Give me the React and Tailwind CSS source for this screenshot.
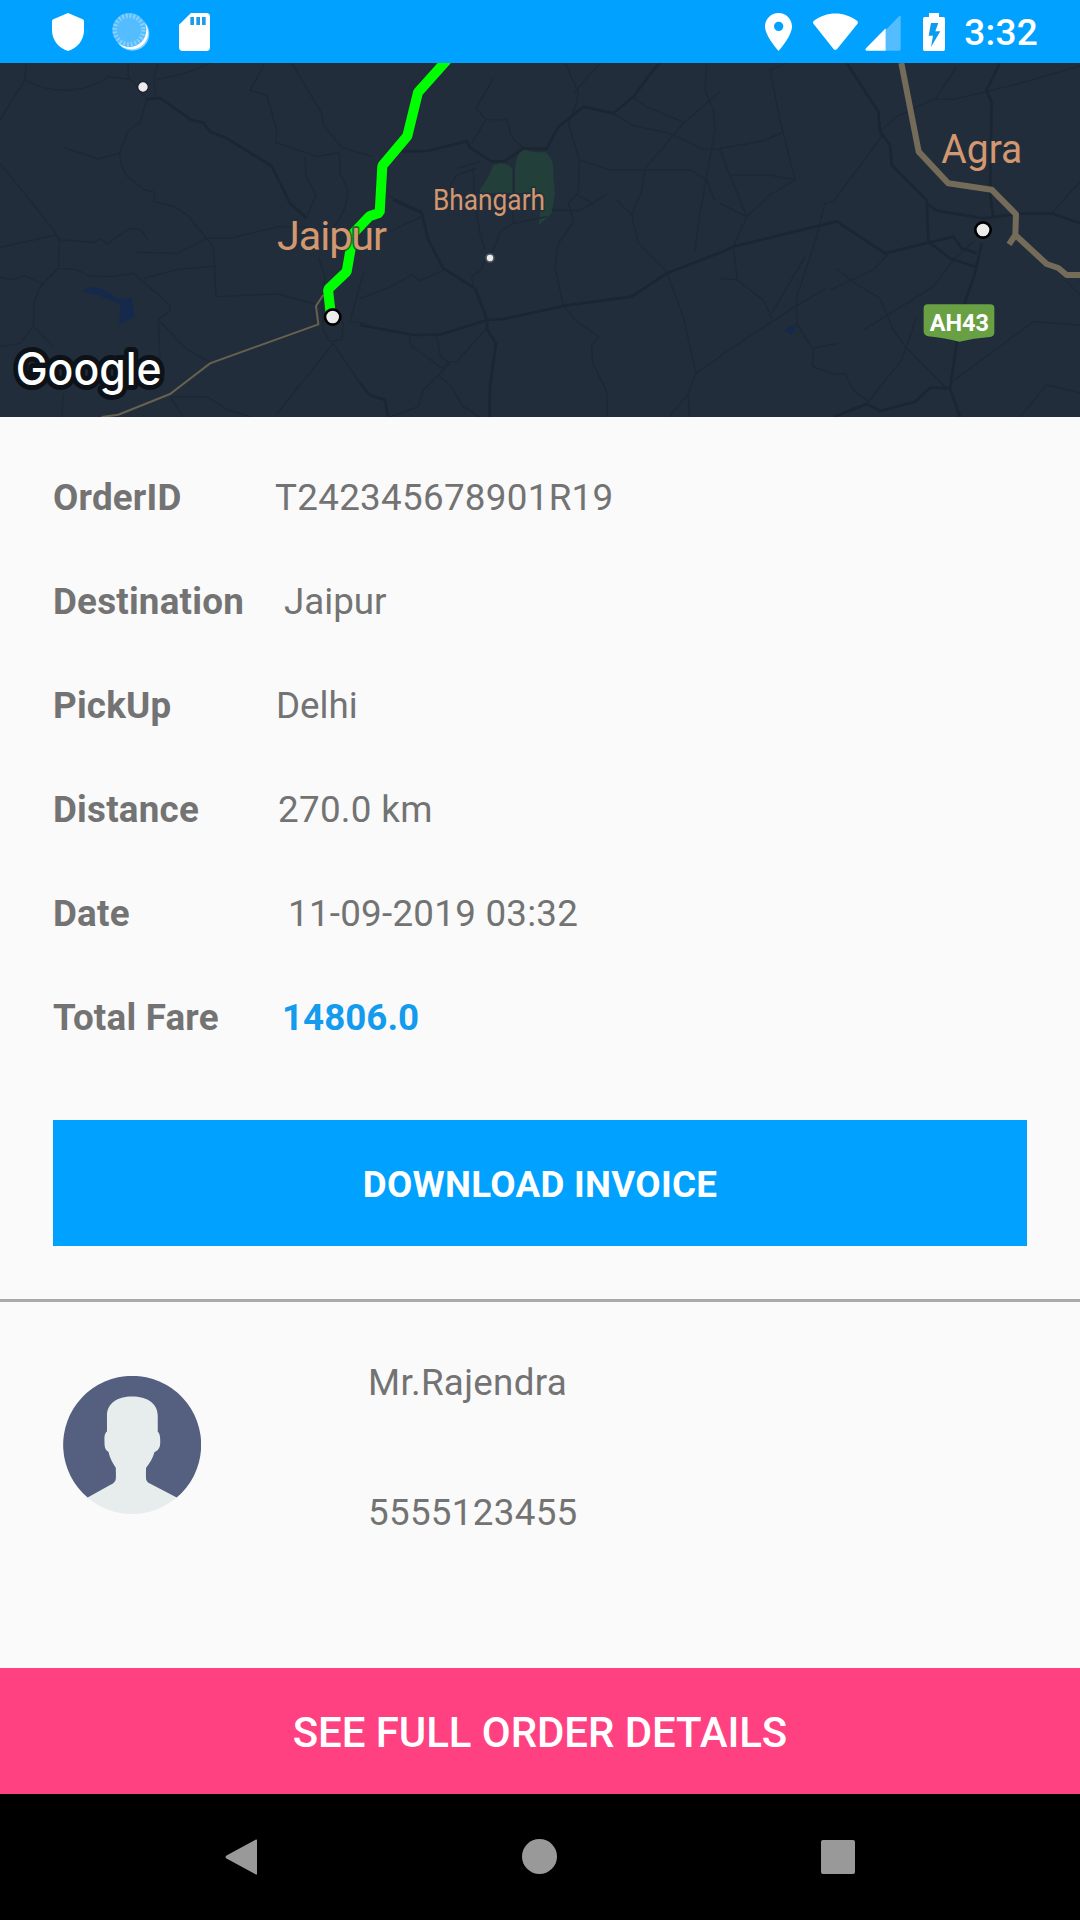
import React from "react";

function StatusBar() {
  return (
    <header className="flex h-[63px] items-center justify-between bg-[#00a1ff] pl-[52px] pr-[42px] text-white">
      <div className="flex items-center">
        <svg className="h-[38px] w-8" viewBox="157 37 96 114" fill="currentColor">
          <path d="M205 37 L249 56 Q253 58 253 62 V89 C253 119 232 144 205 151 C178 144 157 119 157 89 V62 Q157 58 161 56 Z" />
        </svg>
        <svg className="ml-[28px] h-[38px] w-[38px]" viewBox="337 37 114 114">
          <circle cx="398" cy="99" r="51" fill="#8fd3ff" />
          <circle cx="395" cy="96" r="50" fill="#ffffff" />
          <circle cx="389" cy="88" r="51" fill="#54bdff" />
          <circle cx="388" cy="88" r="43" fill="none" stroke="#8dd2ff" strokeWidth="13" strokeDasharray="5 6.3" />
        </svg>
        <svg className="ml-[29px] h-[38px] w-[31px]" viewBox="537 37 93 114">
          <path d="M573 37 H619 Q630 37 630 48 V140 Q630 151 619 151 H548 Q537 151 537 140 V72 Z" fill="#fff" />
          <path d="M571 49h11v24h-11z M589 49h11v24h-11z M606 49h11v24h-11z" fill="#1e9ce8" />
        </svg>
      </div>
      <div className="flex items-center">
        <svg className="h-[38px] w-[27px]" viewBox="75 37 81 114" fill="currentColor">
          <path fillRule="evenodd" d="M116 37 C93 37 75 55 75 77 C75 107 116 151 116 151 C116 151 156 107 156 77 C156 55 138 37 116 37 Z M116 63 a14 14 0 1 1 0 28 a14 14 0 1 1 0 -28 Z" />
        </svg>
        <svg className="ml-[21px] h-[38px] w-[45px]" viewBox="218 37 135 114" fill="currentColor">
          <path d="M220 61 C258 31 312 31 351 61 Q354 66 351 70 L291 144 Q285 151 279 144 L220 70 Q216 65 220 61 Z" />
        </svg>
        <svg className="ml-[7px] h-[38px] w-9" viewBox="373 37 108 114">
          <path d="M435 88 L476 46 Q480 43 480 49 V145 Q480 150 475 150 H435 Z" fill="#54bdff" />
          <path d="M435 83 V150 H377 Q372 149 376 143 Z" fill="#fff" />
        </svg>
        <svg className="ml-[22px] h-[38px] w-[22px]" viewBox="549 36 66 114">
          <path d="M567 36 H597 V48 H610 Q615 48 615 53 V145 Q615 150 610 150 H554 Q549 150 549 145 V53 Q549 48 554 48 H567 Z" fill="#fff" />
          <path d="M573 66 H595 L586 91 H601 L573 138 L579 104 H566 Z" fill="#0d9bf0" />
        </svg>
        <span className="ml-[19px] pt-[3px] text-[37px] leading-[60px] font-medium tracking-[0.2px]">3:32</span>
      </div>
    </header>
  );
}

function RouteMap() {
  return (
    <svg className="block h-[354px] w-[1080px] shrink-0 bg-[#222d3b]" viewBox="0 9 3240 1062">
      <g fill="#152a4b">
        <path d="M250 695 L262 682 L300 684 L358 716 L395 714 L405 768 L358 794 L360 732 L300 708 Z" />
        <path d="M2351 812 L2375 798 L2393 794 L2375 824 Z" />
      </g>
      <g fill="#233f3a">
        <path d="M1440 388 Q1470 350 1478 318 Q1500 302 1530 318 L1540 335 V400 H1440 Z" />
        <path d="M1545 400 L1545 325 Q1550 280 1570 268 L1600 276 L1637 277 Q1665 300 1660 350 L1665 400 L1655 460 L1615 497 L1620 470 L1618 400 Z" />
      </g>

      {/* Minor roads */}
      <g fill="none" stroke="#1d2834" strokeWidth="4" strokeLinejoin="round">
        <path d="M80 9 L74 60 L30 130 L0 180 M74 60 Q140 95 210 90 T325 50 L385 57 L385 9 M385 50 L440 118 M475 9 Q455 50 468 110 M470 58 Q560 45 630 9 M440 118 L422 185 L385 212 L358 280 Q365 330 385 352 L430 388 L465 397 L460 425 L525 440 L565 468 L620 535 L640 560 L648 710 L835 702 L945 732" />
        <path d="M190 262 L295 297 L358 280 M0 310 L75 402 L165 515 L178 545 L175 625 M0 562 L168 525 L185 540 L285 547 L303 535 L320 552 L385 508 Q430 495 442 545 M410 577 L530 580 L620 535 L690 535 L835 500 L920 500 M0 652 L35 660 L72 647 L128 672 L175 625 L228 628 L270 648 L330 650 L400 640 L510 735 L510 750 L475 780 L480 900 M430 655 L535 628 L648 618 M128 672 Q95 720 102 765 L100 800 L60 850 L0 860 M102 800 L160 860 M475 780 L560 868 L635 908 M510 1010 L620 1010 L685 1050 L750 1070 M510 1010 L550 1071 M190 1000 L185 1071" />
        <path d="M795 9 L750 92 L800 105 L830 210 L828 248 L950 290 L1018 277 L1020 340 L1042 385 Q1045 450 1000 500 M875 9 L965 160 L970 195 L1025 262 L1120 290 M915 290 L917 345 L948 405 L920 470 M955 590 L975 650 L965 720 L970 810 L990 845 L1025 838 L1030 790 L990 760 M1090 640 L1050 785 L1100 790 M1000 850 L830 1062 M1000 850 L1080 970" />
        <path d="M1480 55 L1428 145 L1458 178 L1415 250 M1458 178 L1520 180 L1535 230 L1570 265 M1695 9 L1735 95 L1730 130 L1705 190 L1738 300 L1735 400 L1705 430 L1722 485 L1675 550 L1665 620 L1690 735 L1725 780 L1797 832 L1775 855 L1777 905 L1820 995 L1822 1071 M1800 9 L1720 100 M1738 300 L1830 330 L2070 330 L2120 360 L2145 425 M1840 160 L1900 197 L2010 220 L2110 268 L2160 268" />
        <path d="M1900 110 L1930 135 L2052 188 M2160 95 L2052 188 L1935 325 L1925 390 L1895 465 L1915 550 L2000 635 L2050 770 L2088 940 L2065 1000 L2008 1071 M2120 9 L2115 90 L2140 150 L2145 210 L2100 460 L2085 570 M1850 420 L1895 465 M2088 940 L2160 890 M2065 1000 L2068 1071 M1655 450 L1735 452 L1780 430 L1820 402 M1735 408 L1780 430" />
        <path d="M1165 408 L1265 455 M1180 510 L1265 470 M1080 715 L1160 685 L1235 645 L1260 662 L1335 628 M1420 325 L1425 430 L1440 520 L1455 570 M1540 490 L1500 515 L1480 570 L1455 600 L1445 628 L1415 650 L1420 685 M1540 330 L1540 490 L1640 470 M1370 325 L1440 305 M1430 325 L1370 345 L1350 380 M1230 828 L1232 855 L1325 925 L1345 905 L1370 905 L1465 800 M1310 830 L1322 890 L1350 910 L1270 990 L1255 1040 L1170 1071 M1315 945 L1350 975 L1390 1040 L1440 1071" />
        <path d="M2310 30 L2340 180 L2385 360 L2310 405 L2240 470 L2160 270 M2310 30 L2360 9 M2160 265 L2290 243 L2345 218 M2195 345 L2310 345 L2385 360 M2160 430 L2240 470 L2200 560 L2212 660 L2290 720 L2315 775 M2160 655 L2212 660 M2645 230 L2500 425 L2475 430 L2450 530 L2390 710 L2390 790 L2440 870 L2438 920 L2500 942 L2535 942 L2560 990 L2605 1025 L2705 900 L2750 770 M2160 888 L2385 740 L2480 685 M2490 690 L2620 630 L2665 582 M2510 625 L2550 660 L2640 715 L2680 810 L2720 865 L2840 985 M2590 810 L2800 680 L2860 600 L2920 545 M2315 760 L2415 590 M2440 865 L2510 850" />
        <path d="M2645 210 L2690 170 L2800 118 L2860 118 L2960 95 L3060 70 L3240 18 M2870 20 L2805 118 M3240 365 L3155 460 M2850 970 L3100 785 L3240 795 M3060 1071 L3140 975 L3240 998 M3195 660 L3240 705" />
      </g>

      {/* Main roads */}
      <g fill="none" stroke="#1c2632" strokeWidth="8" strokeLinejoin="round">
        <path d="M440 118 L480 114 L575 180 L610 188 L630 215 L680 235 L815 318 L870 430 L920 475" />
        <path d="M1200 275 L1280 273 L1400 244 L1410 262 L1475 305 L1515 303 L1570 265 L1640 267 L1675 200 L1750 140 L1840 160 L1900 110 L1960 30 L1980 9" />
        <path d="M1180 420 L1265 458 L1285 540 L1330 625 L1425 685 L1462 780 L1460 805 L1488 850 L1470 980 L1468 1071 M1080 795 L1240 825 L1320 824 L1460 780 L1510 777 L1700 736 L1895 710 L2000 640 L2160 578 L2200 560 L2510 484 L2655 580 L2785 548 L2860 530 L2885 565 L2930 580 M1080 970 L1110 1005 L1155 1020 L1165 1071" />
        <path d="M2540 9 L2635 155 L2640 215 L2670 255 L2675 315 L2780 420 L2785 545 L2850 595 L2925 620 M2780 430 L2810 452 L2950 475 L3070 460 L3155 460 L3240 490 M3000 9 L2960 90 L2975 130 L2970 400 L2980 475 M2945 550 L2925 640 L2890 740 L2870 850 L2850 985 L2880 1071 M2500 1071 L2600 1032 L2640 1053 L2745 1025 L2790 983 L2850 985" />
      </g>

      {/* Highways */}
      <path d="M305 1071 L355 1064 L510 1002 L630 910 L955 793 L948 738 L970 705" fill="none" stroke="#67614f" strokeWidth="6" />
      <path d="M2704 9 L2756 275 L2845 370 L2975 389 L3048 463 L3046 525 L3140 612 L3175 624 L3200 645 L3240 645 M3046 525 L3027 553" fill="none" stroke="#746b58" strokeWidth="18" strokeLinejoin="round" />

      {/* Planned route */}
      <path d="M1341 0 L1254 97 L1222 228 L1147 317 L1139 458 L1108 469 L1060 520 L1040 635 L984 688 L992 760" fill="none" stroke="#00ff00" strokeWidth="30" strokeLinejoin="bevel" />

      {/* Place markers */}
      <circle cx="429" cy="81" r="16" fill="#ececec" stroke="#1a222d" strokeWidth="4" />
      <circle cx="1470" cy="594" r="12" fill="#ececec" stroke="#4d5560" strokeWidth="5" />
      <circle cx="998" cy="771" r="23" fill="#ececec" stroke="#000" strokeWidth="8" />
      <circle cx="2949" cy="510" r="23" fill="#ececec" stroke="#000" strokeWidth="8" />

      <g className="font-[Roboto,sans-serif]" fill="#d3986f" stroke="#222d3b" strokeOpacity="0.7" strokeWidth="10" strokeLinejoin="round" paintOrder="stroke">
        <text x="831" y="569" fontSize="124" textLength="330">Jaipur</text>
        <text x="1299" y="450" fontSize="86" textLength="336" lengthAdjust="spacingAndGlyphs">Bhangarh</text>
        <text x="2824" y="308" fontSize="124" textLength="243" lengthAdjust="spacingAndGlyphs">Agra</text>
      </g>

      <path d="M2783 733 H2971 Q2983 733 2983 745 V818 Q2983 828 2970 831 Q2920 835 2878 845 Q2836 835 2784 829 Q2771 826 2771 814 V745 Q2771 733 2783 733 Z" fill="#69a044" />
      <text className="font-[Roboto,sans-serif] font-bold" x="2789" y="813" fontSize="70" textLength="178" lengthAdjust="spacingAndGlyphs" fill="#fff">AH43</text>

      <text className="font-[Inter,sans-serif] font-medium" x="47" y="976" fontSize="134" textLength="438" lengthAdjust="spacingAndGlyphs" fill="#fff" stroke="#0c1218" strokeWidth="30" strokeLinejoin="round" paintOrder="stroke">Google</text>
    </svg>
  );
}

const details = [
  { label: "OrderID", value: "T242345678901R19", offset: "-ml-px tracking-[0.3px]" },
  { label: "Destination", value: "Jaipur", offset: "pl-[8px]" },
  { label: "PickUp", value: "Delhi", offset: "pl-0" },
  { label: "Distance", value: "270.0 km", offset: "pl-[2px] tracking-[0.3px]" },
  { label: "Date", value: "11-09-2019 03:32", offset: "pl-[12px] tracking-[0.25px]" },
  { label: "Total Fare", value: "14806.0", offset: "pl-[6px] font-bold text-[#139bed]" },
];

function OrderDetails() {
  return (
    <section className="px-[53px] pt-[28px]">
      <dl>
        {details.map((item) => (
          <div key={item.label} className="flex h-[104px] items-center">
            <dt className="w-[223px] font-bold tracking-[0.22px]">{item.label}</dt>
            <dd className={item.offset}>{item.value}</dd>
          </div>
        ))}
      </dl>
      <button className="mt-[51px] flex h-[126px] w-full items-center justify-center bg-[#00a1ff] pt-[2px] font-bold tracking-[0.28px] text-white">
        DOWNLOAD INVOICE
      </button>
    </section>
  );
}

function Avatar() {
  return (
    <svg className="h-[138px] w-[138px]" viewBox="63 290 386 412" preserveAspectRatio="none">
      <ellipse cx="256" cy="496" rx="193" ry="206" fill="#e7eced" />
      <path d="M132 653 A193 206 0 1 1 381 653 L306 611 C298 606 295 602 295 592 V565 H211 V592 C211 604 206 609 196 615 Z" fill="#556080" />
      <path
        d="M256 351 C215 351 186 372 186 408 V456 C178 462 179 475 179 485 C179 500 180 511 190 516 C194 536 203 551 211 565 V575 H295 V565 C306 550 314 536 319 517 C333 511 335 501 335 485 C335 472 334 462 328 456 V408 C328 372 298 351 256 351 Z"
        fill="#e7eced"
      />
    </svg>
  );
}

function Driver() {
  return (
    <section className="flex flex-1 border-t-[3px] border-[#a9a9a9] pl-[63px] pt-[29px]">
      <div className="pt-[45px]">
        <Avatar />
      </div>
      <div className="ml-[167px] flex flex-col tracking-[0.3px]">
        <span className="leading-[104px]">Mr.Rajendra</span>
        <span className="mt-[26px] leading-[104px]">5555123455</span>
      </div>
    </section>
  );
}

function NavigationBar() {
  return (
    <nav className="flex h-[126px] items-center pb-px pl-[225px] text-[#999]">
      <svg className="h-9 w-8" viewBox="0 0 32 36" fill="currentColor">
        <path d="M31 0.5 Q32 0 32 1.5 V34.5 Q32 36 31 35.5 L1.5 19.5 Q-0.5 18 1.5 16.5 Z" />
      </svg>
      <div className="ml-[265px] h-[35px] w-[35px] rounded-full bg-[#999]" />
      <div className="ml-[264px] h-[34px] w-[34px] rounded-xs bg-[#999]" />
    </nav>
  );
}

export default function App() {
  return (
    <div className="flex h-[1920px] w-[1080px] flex-col overflow-hidden bg-[#fafafa] font-[Roboto,sans-serif] text-[36.75px] leading-[43px] text-[#737373]">
      <StatusBar />
      <RouteMap />
      <OrderDetails />
      <div className="mt-[53px] flex flex-1">
        <Driver />
      </div>
      <button className="flex h-[126px] items-center justify-center bg-[#ff4081] pt-[2px] text-[42px] font-medium tracking-[-0.08px] text-white">
        SEE FULL ORDER DETAILS
      </button>
      <div className="bg-black">
        <NavigationBar />
      </div>
    </div>
  );
}
